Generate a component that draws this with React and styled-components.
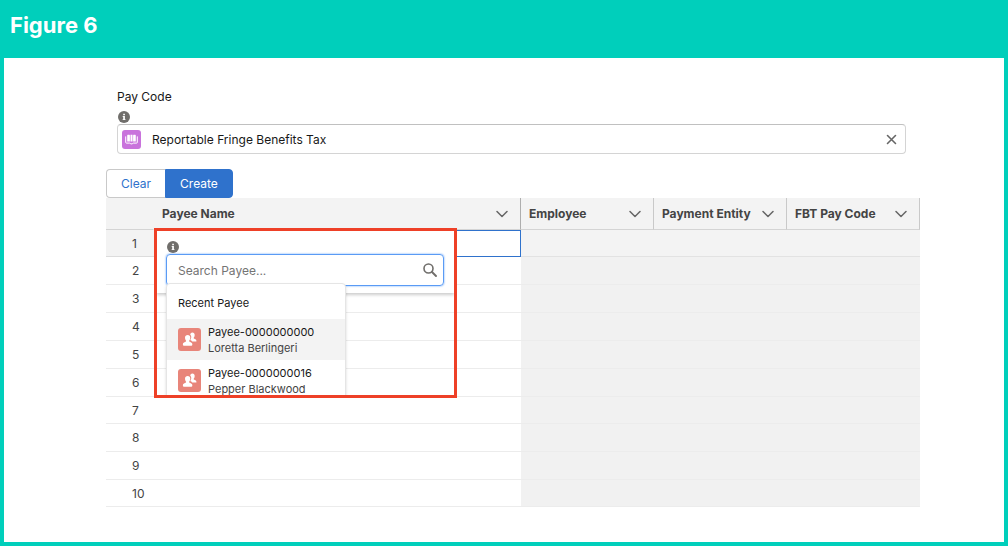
import React from 'react';
import styled, { createGlobalStyle } from 'styled-components';

const GlobalStyle = createGlobalStyle`
  * {
    box-sizing: border-box;
  }
  body {
    margin: 0;
    font-family: Inter, "Liberation Sans", sans-serif;
    font-size: 12px;
    line-height: 16px;
    color: #181818;
  }
  button, input {
    font: inherit;
    color: inherit;
  }
`;

const Page = styled.div`
  display: flex;
  flex-direction: column;
  min-height: 100vh;
  padding: 0 4px 4px;
  background: #00cfbb;
`;

const Title = styled.h1`
  margin: 0;
  padding: 13px 6px 21px;
  font-size: 22px;
  line-height: 24px;
  font-weight: 700;
  color: #fff;
`;

const Panel = styled.main`
  flex: 1;
  padding: 31px 84px 35px 102px;
  background: #fff;
`;

const Field = styled.div`
  padding: 0 14px 0 11px;
`;

const Label = styled.label`
  display: block;
  margin-bottom: 6px;
`;

const InfoDot = styled.svg`
  display: block;
  width: 12px;
  height: 12px;
  margin: 0 0 1px 1px;
`;

const Lookup = styled.div`
  display: flex;
  align-items: center;
  gap: 11px;
  height: 30px;
  padding: 0 8px 0 4px;
  border: 1px solid #d4d4d4;
  border-top-color: #c0c0c0;
  border-radius: 4px;
`;

const LookupInput = styled.input`
  flex: 1;
  min-width: 0;
  padding: 2px 0 0;
  border: 0;
  outline: 0;
  background: none;
`;

const IconButton = styled.button`
  display: flex;
  padding: 0;
  border: 0;
  background: none;
  color: #666;
  cursor: pointer;
`;

const Actions = styled.div`
  display: flex;
  margin-top: 15px;
`;

const Button = styled.button`
  height: 29px;
  padding: 1px 14px 0;
  border: 1px solid ${props => (props.$primary ? '#2f72cc' : '#c9c9c9')};
  border-right-width: ${props => (props.$primary ? '1px' : '0')};
  border-radius: ${props => (props.$primary ? '0 4px 4px 0' : '4px 0 0 4px')};
  background: ${props => (props.$primary ? '#2f72cc' : '#fff')};
  color: ${props => (props.$primary ? '#fff' : '#2f72cc')};
  cursor: pointer;
`;

const Grid = styled.table`
  width: 100%;
  table-layout: fixed;
  border-collapse: separate;
  border-spacing: 0;
`;

const HeadCell = styled.th`
  width: ${props => props.$width || 'auto'};
  height: 32px;
  padding: 0 12px 0 8px;
  border-right: 1px solid ${props => props.$edge || '#c9c9c9'};
  border-bottom: 1px solid #d4d4d4;
  background: #f3f3f3;
  color: #444;
  text-align: left;
`;

const HeadContent = styled.div`
  display: flex;
  align-items: center;
  justify-content: space-between;
  white-space: nowrap;
`;

const Row = styled.tr`
  height: 28px;
  &:nth-child(6n + 1), &:last-child {
    height: 27px;
  }
`;

const NumberCell = styled.th`
  padding: 1px 0 0 26px;
  border-bottom: 1px solid ${props => (props.$active ? '#dcdcdc' : '#ececec')};
  background: ${props => (props.$active ? '#f3f3f3' : '#fff')};
  color: #444;
  font-weight: 400;
  text-align: left;
`;

const Cell = styled.td`
  position: relative;
  padding: 0;
  border-bottom: 1px solid #ececec;
  ${props => props.$active && 'border: 1px solid #2f72cc;'}
`;

const LockedCell = styled.td`
  padding: 0;
  border-bottom: 1px solid ${props => (props.$active ? '#e2e2e2' : '#ececec')};
  background: ${props => (props.$active ? '#f3f3f3' : '#f1f1f1')};
`;

const Popup = styled.div`
  position: absolute;
  z-index: 1;
  top: -3px;
  left: -1px;
  width: 303px;
  height: 170px;
  border: 3px solid #ee4027;
  overflow: hidden;
`;

const Editor = styled.div`
  padding: 10px 10px 7px 9px;
  background: #fff;
  box-shadow: 0 2px 3px rgba(0, 0, 0, 0.2);
`;

const SearchBox = styled.div`
  display: flex;
  align-items: center;
  height: 32px;
  padding: 0 6px 0 11px;
  border: 1px solid #5a9bf5;
  border-radius: 4px;
  box-shadow: 0 0 2px #5a9bf5;
`;

const SearchInput = styled(LookupInput)`
  &::placeholder {
    color: #747474;
    opacity: 1;
  }
`;

const Dropdown = styled.div`
  position: absolute;
  top: 52px;
  left: 9px;
  width: 180px;
  border: 1px solid #e5e5e5;
  border-radius: 4px;
  background: #fff;
  box-shadow: 0 2px 3px rgba(0, 0, 0, 0.16);
  font-size: 11px;
`;

const DropdownTitle = styled.div`
  padding: 11px 11px 8px;
`;

const Options = styled.ul`
  margin: 0;
  padding: 0;
  list-style: none;
`;

const Option = styled.li`
  display: flex;
  align-items: center;
  gap: 7px;
  height: 41px;
  padding: 0 11px;
  background: ${props => (props.$selected ? '#f3f3f3' : '#fff')};
`;

const Detail = styled.div`
  color: #444;
`;

const InfoIcon = () => (
  <InfoDot viewBox="0 0 12 12" aria-hidden="true">
    <circle cx="6" cy="6" r="6" fill="#706e6b" />
    <path d="M5.2 2.7h1.7v1.5H5.2zM4.7 5h2.2v3.2h.6v.9H4.6v-.9h.6V5.9h-.5z" fill="#fff" />
  </InfoDot>
);

const PayCodeIcon = () => (
  <svg width="19" height="19" viewBox="0 0 19 19" aria-hidden="true">
    <rect width="19" height="19" rx="3" fill="#c973dc" />
    <path d="M5.8 4.800h1.500q.6 0 .6.6v6.200H5.200V5.400q0-.6.6-.6zM8.500 4.800h2v6.800h-2zM11.700 4.800h1.500q.6 0 .6.6v6.200h-2.700V5.400q0-.6.6-.6z" fill="#fff" />
    <path d="M3.700 6.400v6q0 .7.7.7h3.300q.7 0 1 .8h1.600q.3-.8 1-.8h3.300q.7 0 .7-.7v-6" fill="none" stroke="#fff" />
  </svg>
);

const PeopleIcon = () => (
  <svg width="23" height="23" viewBox="0 0 23 23" aria-hidden="true">
    <rect width="23" height="23" rx="3" fill="#e8857a" />
    <path d="M14.4 4.6c1.4 0 2.3 1 2.3 2.5 0 1-.3 1.9-.9 2.5-.3.5-.2.9.4 1.2 1.2.5 2.2.9 2.2 2v.6h-4.2c-.5-.6-1.2-1-2-1.3.8-1 1.2-2.2 1-3.5-.1-.8-.5-1.5-1-2 .3-1.2 1-2 2.2-2z" fill="#fff" />
    <path d="M9.700 7c1.600 0 2.600 1.100 2.600 2.700 0 1.100-.4 2-1 2.700-.4.5-.2 1 .4 1.300 1.400.6 2.600 1.100 2.600 2.400v.6q0 1-1 1H6q-1.100 0-1.100-1v-.6c0-1.300 1.200-1.800 2.600-2.400.6-.3.8-.8.4-1.300-.6-.7-.9-1.600-.9-2.700C7 8.100 8.100 7 9.700 7z" fill="#fff" />
  </svg>
);

const ChevronIcon = () => (
  <svg width="12" height="8" viewBox="0 0 12 8" aria-hidden="true">
    <path d="M1 1.500l5 5 5-5" fill="none" stroke="#666" strokeWidth="1.500" strokeLinecap="round" strokeLinejoin="round" />
  </svg>
);

const CloseIcon = () => (
  <svg width="11" height="11" viewBox="0 0 11 11" aria-hidden="true">
    <path d="M1.500 1.500l8 8m0-8l-8 8" fill="none" stroke="currentColor" strokeWidth="1.600" strokeLinecap="round" />
  </svg>
);

const SearchIcon = () => (
  <svg width="14" height="14" viewBox="0 0 14 14" aria-hidden="true">
    <circle cx="5.500" cy="5.500" r="4.500" fill="none" stroke="#706e6b" strokeWidth="1.600" />
    <path d="M9 9l4 4" stroke="#706e6b" strokeWidth="1.900" strokeLinecap="round" />
  </svg>
);

const columns = [
  { name: 'Payee Name', edge: '#aeaeae' },
  { name: 'Employee', width: '133px' },
  { name: 'Payment Entity', width: '133px' },
  { name: 'FBT Pay Code', width: '133px' },
];

const rows = [1, 2, 3, 4, 5, 6, 7, 8, 9, 10];

const payees = [
  { code: 'Payee-0000000000', name: 'Loretta Berlingeri' },
  { code: 'Payee-0000000016', name: 'Pepper Blackwood' },
];

const PayeePopup = () => (
  <Popup>
    <Editor>
      <InfoIcon />
      <SearchBox>
        <SearchInput placeholder="Search Payee..." aria-label="Search Payee" />
        <IconButton type="button" aria-label="Search">
          <SearchIcon />
        </IconButton>
      </SearchBox>
    </Editor>
    <Dropdown>
      <DropdownTitle>Recent Payee</DropdownTitle>
      <Options role="listbox" aria-label="Recent Payee">
        {payees.map((payee, index) => (
          <Option key={payee.code} role="option" aria-selected={index === 0} $selected={index === 0}>
            <PeopleIcon />
            <div>
              <div>{payee.code}</div>
              <Detail>{payee.name}</Detail>
            </div>
          </Option>
        ))}
      </Options>
    </Dropdown>
  </Popup>
);

const App = () => {
  return (
    <>
      <GlobalStyle />
      <Page>
        <Title>Figure 6</Title>
        <Panel>
          <Field>
            <Label htmlFor="pay-code">Pay Code</Label>
            <InfoIcon />
            <Lookup>
              <PayCodeIcon />
              <LookupInput id="pay-code" defaultValue="Reportable Fringe Benefits Tax" />
              <IconButton type="button" aria-label="Remove pay code">
                <CloseIcon />
              </IconButton>
            </Lookup>
          </Field>
          <Actions>
            <Button type="button">Clear</Button>
            <Button type="button" $primary>Create</Button>
          </Actions>
          <Grid>
            <thead>
              <tr>
                <HeadCell $width="48px" $edge="#f3f3f3" aria-label="Row" />
                {columns.map(column => (
                  <HeadCell key={column.name} scope="col" $width={column.width} $edge={column.edge}>
                    <HeadContent>
                      {column.name}
                      <IconButton type="button" aria-label={`${column.name} menu`}>
                        <ChevronIcon />
                      </IconButton>
                    </HeadContent>
                  </HeadCell>
                ))}
              </tr>
            </thead>
            <tbody>
              {rows.map(row => (
                <Row key={row}>
                  <NumberCell scope="row" $active={row === 1}>{row}</NumberCell>
                  <Cell $active={row === 1}>{row === 1 && <PayeePopup />}</Cell>
                  <LockedCell $active={row === 1} />
                  <LockedCell $active={row === 1} />
                  <LockedCell $active={row === 1} />
                </Row>
              ))}
            </tbody>
          </Grid>
        </Panel>
      </Page>
    </>
  );
};

export default App;
